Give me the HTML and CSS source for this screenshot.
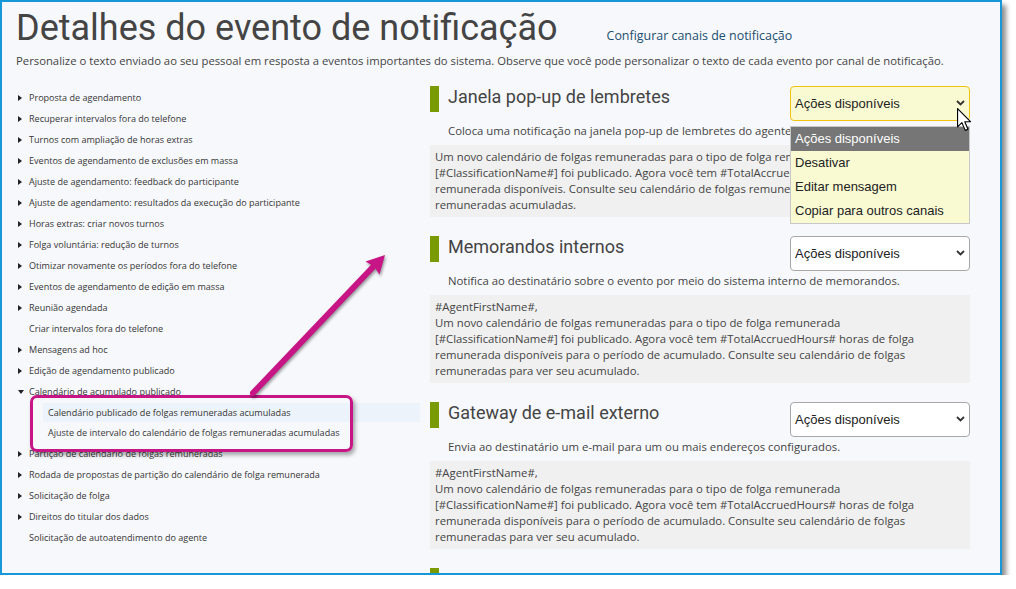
FILE: index.html
```html
<!DOCTYPE html>
<html lang="pt-BR">
<head>
    <meta charset="UTF-8">
    <meta name="viewport" content="width=device-width, initial-scale=1.0">
    <title>Detalhes do evento de notificação</title>
    <link rel="stylesheet" href="styles.css">
</head>
<body>
    <div class="frame">
        <header class="page-head">
            <div class="title-row">
                <h1>Detalhes do evento de notificação</h1>
                <a class="config-link" href="#">Configurar canais de notificação</a>
            </div>
            <p class="intro">Personalize o texto enviado ao seu pessoal em resposta a eventos importantes do sistema. Observe que você pode personalizar o texto de cada evento por canal de notificação.</p>
        </header>

        <div class="content">
            <ul class="event-tree">
                <li class="item">Proposta de agendamento</li>
                <li class="item">Recuperar intervalos fora do telefone</li>
                <li class="item">Turnos com ampliação de horas extras</li>
                <li class="item">Eventos de agendamento de exclusões em massa</li>
                <li class="item">Ajuste de agendamento: feedback do participante</li>
                <li class="item">Ajuste de agendamento: resultados da execução do participante</li>
                <li class="item">Horas extras: criar novos turnos</li>
                <li class="item">Folga voluntária: redução de turnos</li>
                <li class="item">Otimizar novamente os períodos fora do telefone</li>
                <li class="item">Eventos de agendamento de edição em massa</li>
                <li class="item">Reunião agendada</li>
                <li class="plain">Criar intervalos fora do telefone</li>
                <li class="item">Mensagens ad hoc</li>
                <li class="item">Edição de agendamento publicado</li>
                <li class="item open">Calendário de acumulado publicado</li>
                <li class="sub current">Calendário publicado de folgas remuneradas acumuladas</li>
                <li class="sub">Ajuste de intervalo do calendário de folgas remuneradas acumuladas</li>
                <li class="item">Partição de calendário de folgas remuneradas</li>
                <li class="item">Rodada de propostas de partição do calendário de folga remunerada</li>
                <li class="item">Solicitação de folga</li>
                <li class="item">Direitos do titular dos dados</li>
                <li class="plain">Solicitação de autoatendimento do agente</li>
            </ul>

            <div class="channels">
                <section class="channel">
                    <div class="channel-head">
                        <span class="channel-bar"></span>
                        <h2>Janela pop-up de lembretes</h2>
                        <div class="action-select open">
                            <span>Ações disponíveis</span>
                            <svg class="chevron" width="9" height="6" viewBox="0 0 9 6"><polyline points="1,1 4.5,4.5 8,1" fill="none" stroke="#333" stroke-width="1.8"/></svg>
                            <ul class="options">
                                <li class="selected">Ações disponíveis</li>
                                <li>Desativar</li>
                                <li>Editar mensagem</li>
                                <li>Copiar para outros canais</li>
                            </ul>
                        </div>
                    </div>
                    <p class="channel-desc">Coloca uma notificação na janela pop-up de lembretes do agente.</p>
                    <div class="channel-msg">
                        Um novo calendário de folgas remuneradas para o tipo de folga remunerada<br>
                        [#ClassificationName#] foi publicado. Agora você tem #TotalAccruedHours# horas de folga<br>
                        remunerada disponíveis. Consulte seu calendário de folgas remuneradas para ver suas folgas<br>
                        remuneradas acumuladas.
                    </div>
                </section>

                <section class="channel">
                    <div class="channel-head">
                        <span class="channel-bar"></span>
                        <h2>Memorandos internos</h2>
                        <div class="action-select">
                            <span>Ações disponíveis</span>
                            <svg class="chevron" width="9" height="6" viewBox="0 0 9 6"><polyline points="1,1 4.5,4.5 8,1" fill="none" stroke="#333" stroke-width="1.8"/></svg>
                        </div>
                    </div>
                    <p class="channel-desc">Notifica ao destinatário sobre o evento por meio do sistema interno de memorandos.</p>
                    <div class="channel-msg">
                        #AgentFirstName#,<br>
                        Um novo calendário de folgas remuneradas para o tipo de folga remunerada<br>
                        [#ClassificationName#] foi publicado. Agora você tem #TotalAccruedHours# horas de folga<br>
                        remunerada disponíveis para o período de acumulado. Consulte seu calendário de folgas<br>
                        remuneradas para ver seu acumulado.
                    </div>
                </section>

                <section class="channel">
                    <div class="channel-head">
                        <span class="channel-bar"></span>
                        <h2>Gateway de e-mail externo</h2>
                        <div class="action-select">
                            <span>Ações disponíveis</span>
                            <svg class="chevron" width="9" height="6" viewBox="0 0 9 6"><polyline points="1,1 4.5,4.5 8,1" fill="none" stroke="#333" stroke-width="1.8"/></svg>
                        </div>
                    </div>
                    <p class="channel-desc">Envia ao destinatário um e-mail para um ou mais endereços configurados.</p>
                    <div class="channel-msg">
                        #AgentFirstName#,<br>
                        Um novo calendário de folgas remuneradas para o tipo de folga remunerada<br>
                        [#ClassificationName#] foi publicado. Agora você tem #TotalAccruedHours# horas de folga<br>
                        remunerada disponíveis para o período de acumulado. Consulte seu calendário de folgas<br>
                        remuneradas para ver seu acumulado.
                    </div>
                </section>

                <section class="channel channel-cut">
                    <div class="channel-head">
                        <span class="channel-bar"></span>
                        <h2>Notificação do aplicativo móvel do agente</h2>
                    </div>
                </section>
            </div>
        </div>

        <!-- marcações da captura -->
        <div class="callout-box"></div>
        <svg class="callout-arrow" width="1002" height="575" viewBox="0 0 1002 575">
            <line x1="253" y1="393" x2="373" y2="267" stroke="#c71585" stroke-width="6" stroke-linecap="round"/>
            <polygon points="385,255 379.5,274.5 374,266.5 365.5,261.5" fill="#c71585"/>
        </svg>
        <svg class="cursor" width="16" height="24" viewBox="0 0 14 21">
            <path d="M0.5 0.5 L0.5 16.5 L4.3 12.8 L7.2 19.6 L9.6 18.6 L6.8 12 L11.8 12 Z" fill="#fff" stroke="#000" stroke-width="1" stroke-linejoin="round"/>
        </svg>
    </div>
</body>
</html>
```

FILE: styles.css
```css
body {
    margin: 0;
    background: #fff;
    font-family: "Open Sans", sans-serif;
    color: #444;
}
.frame {
    position: relative;
    width: 1002px;
    height: 575px;
    box-sizing: border-box;
    border: 2px solid #1597d8;
    background: #f7f8fc;
    box-shadow: 4px 5px 5px rgba(0,0,0,0.45);
    overflow: hidden;
    padding-top: 5px;
}
.page-head {
    padding-left: 14px;
}
.title-row {
    display: flex;
    align-items: baseline;
}
.title-row h1 {
    margin: 0;
    font-family: Roboto, sans-serif;
    font-weight: 400;
    font-size: 36px;
    line-height: 42px;
    color: #444;
}
.config-link {
    margin-left: 49px;
    font-size: 12.45px;
    color: #1c4f6f;
    text-decoration: none;
}
.intro {
    margin: 4px 0 0;
    font-size: 11.3px;
    line-height: 16px;
}
.content {
    display: grid;
    grid-template-columns: 418px 540px;
    column-gap: 10px;
    margin-top: 17px;
}

/* arvore de eventos */
.event-tree {
    list-style: none;
    margin: 0;
    padding: 1px 0 0;
    font-size: 9.05px;
    line-height: 21px;
    color: #363636;
}
.event-tree li {
    white-space: nowrap;
}
.event-tree .item {
    display: flex;
    align-items: center;
    padding-left: 16px;
}
.event-tree .item::before {
    content: "";
    border-left: 4px solid #222;
    border-top: 3.5px solid transparent;
    border-bottom: 3.5px solid transparent;
    margin-right: 7px;
}
.event-tree .item.open::before {
    border-left: 3px solid transparent;
    border-right: 3px solid transparent;
    border-top: 4px solid #222;
    border-bottom: 0;
    margin: 0 5px 0 2px;
}
.event-tree .item.open {
    padding-left: 14px;
}
.event-tree .plain {
    padding-left: 27px;
}
.event-tree .sub {
    margin: 1px 0 1px 41px;
    height: 19px;
    line-height: 19px;
    padding-left: 5px;
}
.event-tree .sub.current {
    background: #edf3fb;
}

/* canais */
.channel {
    margin-bottom: 19px;
}
.channel-head {
    display: flex;
    height: 35px;
}
.channel-bar {
    flex: none;
    width: 9px;
    height: 26px;
    background: #7a9a01;
}
.channel-head h2 {
    margin: 0 0 0 9px;
    font-family: Roboto, sans-serif;
    font-weight: 400;
    font-size: 18px;
    line-height: 22px;
    color: #444;
    white-space: nowrap;
}
.channel-cut .channel-head h2 {
    padding-top: 3px;
}
.action-select {
    position: relative;
    margin-left: auto;
    width: 180px;
    height: 35px;
    box-sizing: border-box;
    border: 1px solid #a8a8a8;
    border-radius: 4px;
    background: #fff;
    display: flex;
    align-items: center;
    justify-content: space-between;
    padding: 0 4px;
    font-family: "Liberation Sans", Arial, sans-serif;
    font-size: 13px;
    color: #222;
}
.action-select.open {
    background: #fafad2;
    border-color: #f0c20c;
}
.chevron {
    margin-top: -1px;
}
.options {
    position: absolute;
    top: 39px;
    left: -1px;
    z-index: 2;
    width: 180px;
    box-sizing: border-box;
    margin: 0;
    padding: 0;
    list-style: none;
    background: #fafad2;
    border: 1px solid #c8c8c8;
}
.options li {
    height: 24px;
    line-height: 24px;
    padding-left: 4px;
}
.options li.selected {
    background: #767676;
    color: #fff;
}
.channel-desc {
    margin: 2px 0 6px 18px;
    font-size: 11.35px;
    line-height: 16px;
    white-space: nowrap;
}
.channel-msg {
    background: #f0f0f0;
    padding: 4px 5px;
    font-size: 11.34px;
    line-height: 16px;
    white-space: nowrap;
}

/* marcacoes */
.callout-box {
    position: absolute;
    left: 28px;
    top: 393px;
    width: 323px;
    height: 57px;
    box-sizing: border-box;
    border: 3px solid #c71585;
    border-radius: 7px;
    box-shadow: 2px 3px 4px rgba(0,0,0,0.35);
    z-index: 3;
}
.callout-arrow {
    position: absolute;
    left: -2px;
    top: -2px;
    z-index: 3;
    pointer-events: none;
    filter: drop-shadow(1px 2px 1.5px rgba(0,0,0,0.4));
}
.cursor {
    position: absolute;
    left: 955px;
    top: 106px;
    z-index: 4;
}
```
